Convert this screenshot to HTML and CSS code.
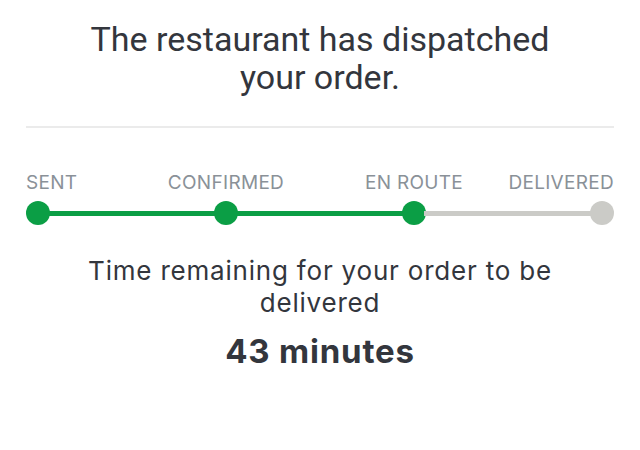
FILE: index.html
```html
<!DOCTYPE html>
<html>
<head>
<title>Order status</title>
<link rel="stylesheet" href="styles.css">
</head>
<body>
<div class="order-status">
  <h1 class="status-title">The restaurant has dispatched<br>your order.</h1>
  <div class="divider"></div>
  <div class="tracker">
    <div class="tracker-labels">
      <span class="first">SENT</span>
      <span>CONFIRMED</span>
      <span>EN ROUTE</span>
      <span class="last">DELIVERED</span>
    </div>
    <div class="tracker-bar">
      <span class="dot done"></span>
      <span class="line done"></span>
      <span class="dot done"></span>
      <span class="line done"></span>
      <span class="dot done"></span>
      <span class="line"></span>
      <span class="dot"></span>
    </div>
  </div>
  <p class="remaining-label">Time remaining for your order to be delivered</p>
  <p class="remaining-time">43 minutes</p>
</div>
</body>
</html>
```

FILE: styles.css
```css
body {
    margin: 0;
    font-family: Inter, Roboto, "Liberation Sans", sans-serif;
    color: #33363d;
    background: #fff;
}
.order-status {
    padding: 0 26px;
    text-align: center;
}
.status-title {
    margin: 0;
    padding-top: 20px;
    font-family: Roboto, "Liberation Sans", sans-serif;
    font-size: 34px;
    font-weight: 400;
    line-height: 38px;
}
.divider {
    height: 2px;
    background-color: #ebebeb;
    margin-top: 30px;
}
.tracker {
    margin-top: 44px;
}
.tracker-labels {
    display: grid;
    grid-template-columns: 1fr 188px 188px 1fr;
    font-size: 19px;
    line-height: 22px;
    letter-spacing: 0.3px;
    color: #8a9198;
    white-space: nowrap;
}
.tracker-labels .first {
    text-align: left;
}
.tracker-labels .last {
    text-align: right;
}
.tracker-bar {
    display: flex;
    align-items: center;
    margin-top: 7px;
}
.dot {
    width: 24px;
    height: 24px;
    border-radius: 50%;
    background-color: #cbcbc7;
    flex: none;
}
.line {
    flex: 1;
    height: 5px;
    margin: 0 -2px;
    background-color: #cbcbc7;
}
.dot.done, .line.done {
    background-color: #0b9e45;
}
.remaining-label {
    max-width: 500px;
    margin: 30px auto 0;
    font-size: 26px;
    line-height: 32px;
    letter-spacing: 0.8px;
}
.remaining-time {
    margin: 12px 0 0;
    font-size: 33px;
    font-weight: 700;
    line-height: 40px;
    letter-spacing: 0.8px;
}
```
